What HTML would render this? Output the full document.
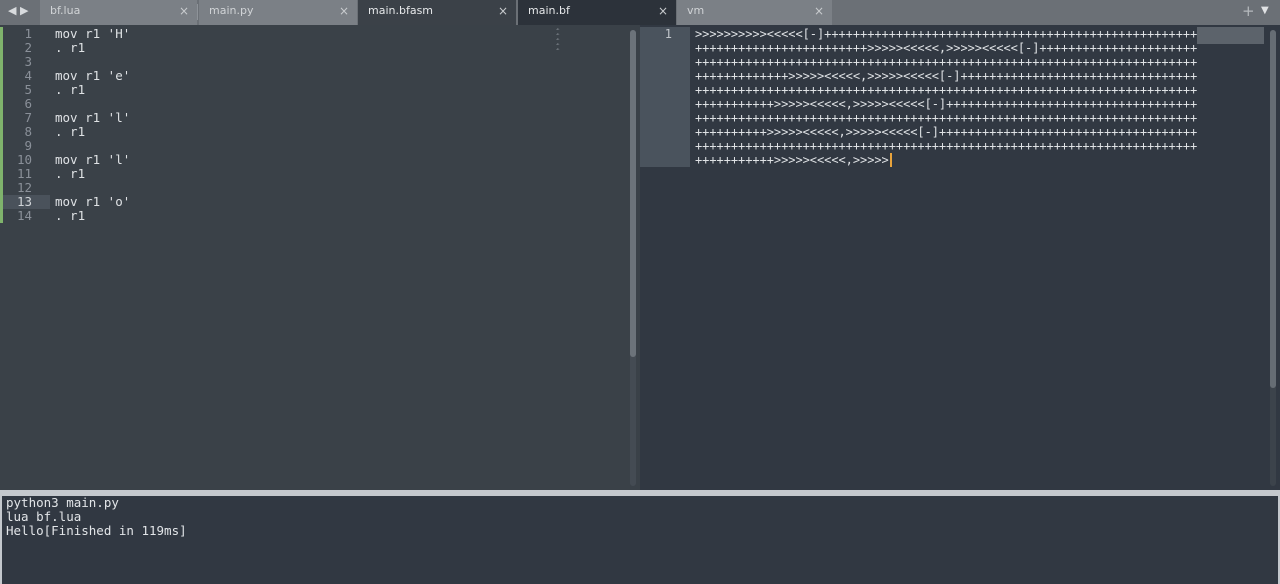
<!DOCTYPE html>
<html><head><style>
*{margin:0;padding:0;box-sizing:border-box}
body{width:1280px;height:584px;overflow:hidden;background:#313842;font-family:"DejaVu Sans Mono","Liberation Mono",monospace;font-size:12px;position:relative}
.tabs{position:absolute;left:0;top:0;width:1280px;height:25px;background:#6b7076}
.tab{position:absolute;top:0;height:25px;font-family:"DejaVu Sans","Liberation Sans",sans-serif;font-size:11px;line-height:22px;padding-left:10px;color:#d0d3d6}
.tab .x{position:absolute;right:8px;top:0;color:#c8cbce;font-size:12px}
.abs{position:absolute}
.ln{position:absolute;width:32px;text-align:right;color:#8a9099;line-height:14px}
.code{position:absolute;color:#dfe2e5;line-height:14px;white-space:pre}
</style></head><body>
<div class="tabs">
 <div class="abs" style="left:8px;top:4px;color:#d8dbde;font-size:11px;font-family:'DejaVu Sans',sans-serif">◀ ▶</div>
 <div class="tab" style="left:40px;width:157px;background:#7b8086">bf.lua<span class="x">×</span></div>
 <div class="abs" style="left:197px;top:4px;width:1px;height:16px;background:#8e9399"></div>
 <div class="tab" style="left:199px;width:158px;background:#7b8086">main.py<span class="x">×</span></div>
 <div class="tab" style="left:358px;width:158px;background:#3b4148;color:#e6e8ea">main.bfasm<span class="x">×</span></div>
 <div class="tab" style="left:518px;width:158px;background:#2c323a;color:#e6e8ea">main.bf<span class="x">×</span></div>
 <div class="tab" style="left:677px;width:155px;background:#7b8086">vm<span class="x">×</span></div>
 <div class="abs" style="left:1242px;top:2px;color:#b5b9bd;font-size:15px;font-family:'DejaVu Sans',sans-serif">+</div>
 <div class="abs" style="left:1261px;top:5px;color:#e0e2e4;font-size:10px;font-family:'DejaVu Sans',sans-serif">▼</div>
</div>
<!-- left editor -->
<div class="abs" style="left:0;top:25px;width:640px;height:465px;background:#3a4148"></div>
<div class="abs" style="left:0;top:27px;width:3px;height:196px;background:#7fb36c"></div>
<div class="abs" style="left:3px;top:195px;width:47px;height:14px;background:#4a525b"></div>
<div class="ln" style="left:0;top:27px;font-size:12.5px">1<br>2<br>3<br>4<br>5<br>6<br>7<br>8<br>9<br>10<br>11<br>12<br><span style="color:#d0d4d8">13</span><br>14</div>
<div class="code" style="left:55px;top:27px;font-size:12.5px">mov r1 'H'
. r1

mov r1 'e'
. r1

mov r1 'l'
. r1

mov r1 'l'
. r1

mov r1 'o'
. r1</div>
<div class="abs" style="left:556px;top:27px;color:#7d848b;font-size:6px;line-height:5px">⩡<br>⩡<br>⩡<br>⩡<br>⩡</div>
<div class="abs" style="left:630px;top:30px;width:6px;height:456px;background:#444b53;border-radius:3px"></div>
<div class="abs" style="left:630px;top:30px;width:6px;height:327px;background:#6c737a;border-radius:3px"></div>
<!-- right editor -->
<div class="abs" style="left:640px;top:25px;width:640px;height:465px;background:#313842"></div>
<div class="abs" style="left:640px;top:27px;width:50px;height:140px;background:#4a535d"></div>
<div class="ln" style="left:640px;top:27px;width:32px;color:#c0c5ca">1</div>
<div class="abs" style="left:1197px;top:27px;width:67px;height:17px;background:#5c636b"></div>
<div class="code" style="left:695px;top:27px;letter-spacing:-0.05px">&gt;&gt;&gt;&gt;&gt;&gt;&gt;&gt;&gt;&gt;&lt;&lt;&lt;&lt;&lt;[-]++++++++++++++++++++++++++++++++++++++++++++++++++++
++++++++++++++++++++++++&gt;&gt;&gt;&gt;&gt;&lt;&lt;&lt;&lt;&lt;,&gt;&gt;&gt;&gt;&gt;&lt;&lt;&lt;&lt;&lt;[-]++++++++++++++++++++++
++++++++++++++++++++++++++++++++++++++++++++++++++++++++++++++++++++++
+++++++++++++&gt;&gt;&gt;&gt;&gt;&lt;&lt;&lt;&lt;&lt;,&gt;&gt;&gt;&gt;&gt;&lt;&lt;&lt;&lt;&lt;[-]+++++++++++++++++++++++++++++++++
++++++++++++++++++++++++++++++++++++++++++++++++++++++++++++++++++++++
+++++++++++&gt;&gt;&gt;&gt;&gt;&lt;&lt;&lt;&lt;&lt;,&gt;&gt;&gt;&gt;&gt;&lt;&lt;&lt;&lt;&lt;[-]+++++++++++++++++++++++++++++++++++
++++++++++++++++++++++++++++++++++++++++++++++++++++++++++++++++++++++
++++++++++&gt;&gt;&gt;&gt;&gt;&lt;&lt;&lt;&lt;&lt;,&gt;&gt;&gt;&gt;&gt;&lt;&lt;&lt;&lt;&lt;[-]++++++++++++++++++++++++++++++++++++
++++++++++++++++++++++++++++++++++++++++++++++++++++++++++++++++++++++
+++++++++++&gt;&gt;&gt;&gt;&gt;&lt;&lt;&lt;&lt;&lt;,&gt;&gt;&gt;&gt;&gt;<span style="border-left:2px solid #e8a33c;margin-left:1px"></span></div>
<div class="abs" style="left:1270px;top:30px;width:6px;height:456px;background:#3c434b;border-radius:3px"></div>
<div class="abs" style="left:1270px;top:30px;width:6px;height:358px;background:#666d74;border-radius:3px"></div>
<!-- output panel -->
<div class="abs" style="left:0;top:490px;width:1280px;height:6px;background:#c4c8cd"></div>
<div class="abs" style="left:0;top:496px;width:2px;height:88px;background:#c4c8cd"></div>
<div class="abs" style="left:1278px;top:496px;width:2px;height:88px;background:#c4c8cd"></div>
<div class="abs" style="left:2px;top:496px;width:1276px;height:88px;background:#313842"></div>
<div class="code" style="left:6px;top:496px;color:#e2e5e8;font-size:12.5px">python3 main.py
lua bf.lua
Hello[Finished in 119ms]</div>
</body></html>
